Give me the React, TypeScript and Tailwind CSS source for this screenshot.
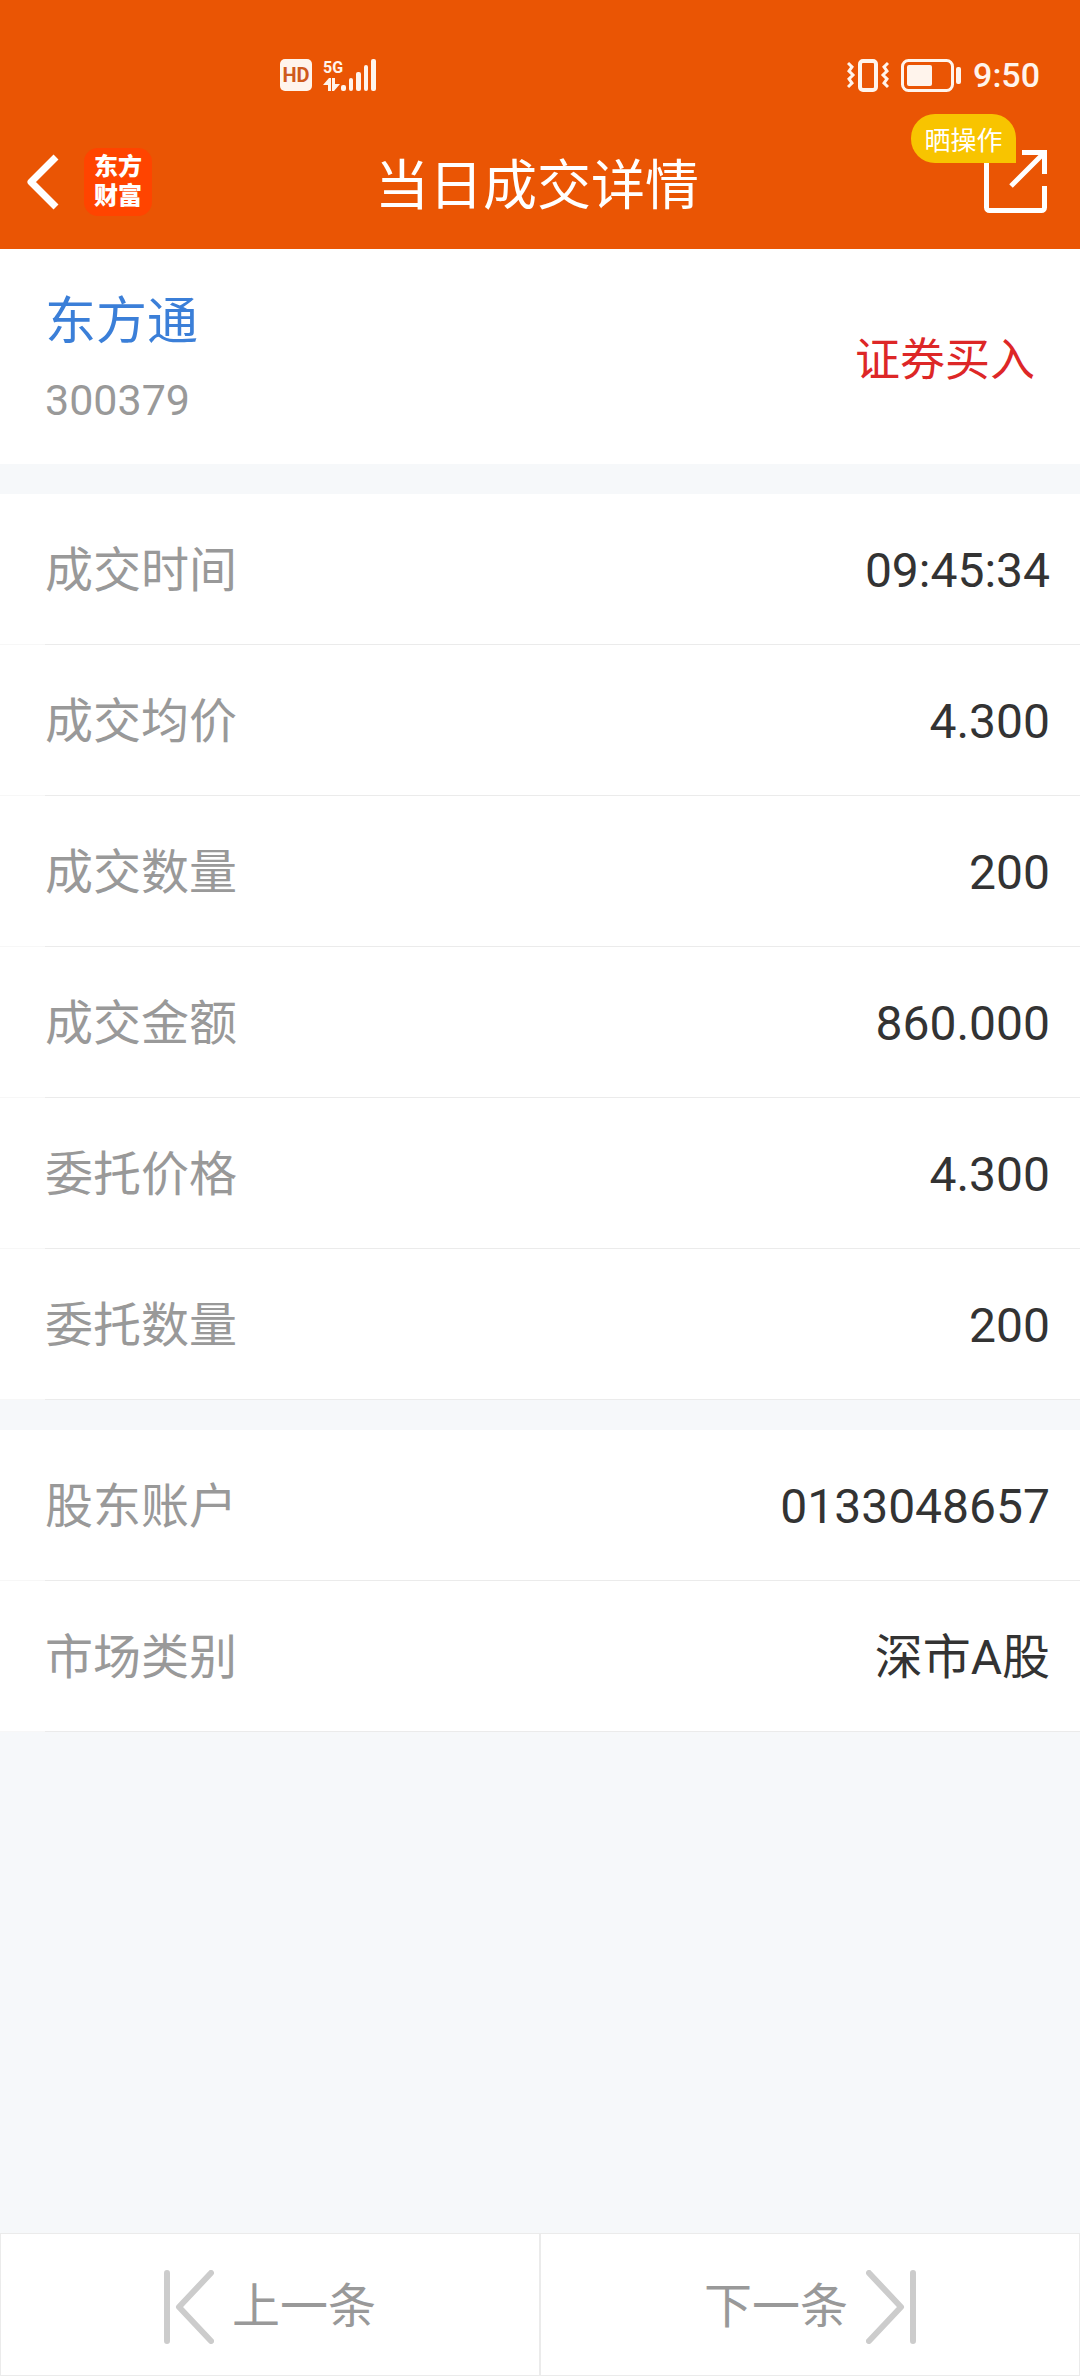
const tradeRows = [
  { label: '成交时间', value: '09:45:34' },
  { label: '成交均价', value: '4.300' },
  { label: '成交数量', value: '200' },
  { label: '成交金额', value: '860.000' },
  { label: '委托价格', value: '4.300' },
  { label: '委托数量', value: '200' },
];

const accountRows = [
  { label: '股东账户', value: '0133048657' },
  { label: '市场类别', value: '深市A股' },
];

function SignalIcon() {
  return (
    <svg width="54" height="34" viewBox="0 0 54 34" fill="#fff4ec">
      <text x="0" y="15" fontSize="16" fontWeight="700" fontFamily="Roboto, sans-serif">
        5G
      </text>
      <path d="M0 27 6 20h2v13H5v-6zM9 20h3v6h5l-6 7H9z" />
      <rect x="18" y="27" width="5" height="6" rx="2" />
      <rect x="26" y="20" width="4" height="13" rx="2" />
      <rect x="33" y="14" width="5" height="19" rx="2" />
      <rect x="41" y="7" width="4" height="26" rx="2" />
      <rect x="48" y="1" width="5" height="32" rx="2" />
    </svg>
  );
}

function VibrateIcon() {
  return (
    <svg width="42" height="34" viewBox="0 0 42 34" fill="none" stroke="#fff4ec" strokeWidth="3">
      <rect x="13" y="3" width="16" height="29" rx="3" strokeWidth="4" />
      <path d="M1 5l4 4-3 4 4 4-4 4 3 4-4 4M41 5l-4 4 3 4-4 4 4 4-3 4 4 4" />
    </svg>
  );
}

function BatteryIcon() {
  return (
    <svg width="60" height="34" viewBox="0 0 60 34" fill="#fff4ec">
      <rect x="1.5" y="2.5" width="50" height="30" rx="6" fill="none" stroke="#fff4ec" strokeWidth="3" />
      <rect x="6" y="7" width="25" height="21" rx="2" />
      <rect x="55" y="9" width="5" height="17" rx="2" />
    </svg>
  );
}

function InfoList({ rows }: { rows: { label: string; value: string }[] }) {
  return (
    <dl className="bg-white">
      {rows.map((row) => (
        <div key={row.label}>
          <div className="flex h-[150px] items-center justify-between pt-1 pl-[45px] pr-[30px] text-[48px] leading-[60px]">
            <dt className="text-[#999999]">{row.label}</dt>
            <dd className="text-[#333333]">{row.value}</dd>
          </div>
          <div className="flex h-px bg-[#ebebeb]">
            <div className="w-[45px] bg-[#f7f7f7]" />
          </div>
        </div>
      ))}
    </dl>
  );
}

export default function App() {
  return (
    <div className="flex min-h-screen flex-col bg-[#f6f8fa] font-['Roboto','Noto_Sans_CJK_SC',sans-serif]">
      <header className="bg-[#ea5504] text-white">
        {/* Status bar */}
        <div className="flex h-[114px] items-center justify-between pl-[280px] pr-[40px] pt-[36px] text-[#fff4ec]">
          <div className="flex items-center gap-[11px]">
            <span className="flex size-8 items-center justify-center rounded-[5px] bg-[#fff4ec] text-[20px] font-bold leading-8 text-[#cf5a1c]">
              HD
            </span>
            <SignalIcon />
          </div>
          <div className="flex items-center gap-3">
            <VibrateIcon />
            <BatteryIcon />
            <span className="text-[34px] font-medium leading-[40px]">9:50</span>
          </div>
        </div>

        {/* Title bar */}
        <div className="grid h-[135px] grid-cols-[1fr_auto_1fr] items-center pl-[27px] pr-[33px]">
          <div className="flex items-center gap-[25px]">
            <button type="button" aria-label="返回">
              <svg width="32" height="56" viewBox="0 0 32 56" fill="none" stroke="#fff" strokeWidth="7">
                <path d="M29 3 4 28l25 25" strokeLinejoin="round" />
              </svg>
            </button>
            <div className="flex size-[68px] flex-col items-center justify-center rounded-[14px] bg-[#ff4400] text-[24px] font-black leading-[29px]">
              <span>东方</span>
              <span>财富</span>
            </div>
          </div>
          <h1 className="font-['Noto_Sans_CJK_SC',sans-serif] text-[54px] leading-[64px]">当日成交详情</h1>
          <button type="button" aria-label="分享" className="relative justify-self-end">
            <svg width="63" height="63" viewBox="0 0 63 63" fill="none" stroke="#fff" strokeWidth="5">
              <path d="M2.500 0v57.500a3 3 0 0 0 3 3h52a3 3 0 0 0 3-3V36M38 2.500h22.500V24M60 3 27 36" />
            </svg>
            <span className="absolute -top-9 right-[31px] flex h-[49px] w-[105px] items-center justify-center rounded-[24px] rounded-br-none bg-[#f8c400] pt-1 text-[26px] leading-[32px]">
              晒操作
            </span>
          </button>
        </div>
      </header>

      <main className="flex grow flex-col gap-[30px]">
        <section className="flex h-[215px] items-center justify-between bg-white px-[45px] pt-2">
          <div>
            <h2 className="text-[51px] leading-[78px] text-[#3b7fd8]">东方通</h2>
            <p className="text-[43px] leading-[78px] text-[#999999]">300379</p>
          </div>
          <span className="text-[45px] leading-[60px] text-[#dd2727]">证券买入</span>
        </section>
        <InfoList rows={tradeRows} />
        <InfoList rows={accountRows} />
      </main>

      <nav className="grid h-[143px] grid-cols-2 text-[48px] leading-[60px] text-[#999999]">
        <button type="button" className="flex items-center justify-center gap-[18px] border border-[#ebebeb] bg-white pt-1">
          <svg width="50" height="74" viewBox="0 0 50 74" fill="none" stroke="#cccccc" strokeWidth="6" strokeLinecap="round" strokeLinejoin="round">
            <path d="M3 3v68M47 3 15 37l32 34" />
          </svg>
          上一条
        </button>
        <button type="button" className="flex items-center justify-center gap-[18px] border border-[#ebebeb] bg-white pt-1">
          下一条
          <svg width="50" height="74" viewBox="0 0 50 74" fill="none" stroke="#cccccc" strokeWidth="6" strokeLinecap="round" strokeLinejoin="round">
            <path d="M47 3v68M3 3l32 34L3 71" />
          </svg>
        </button>
      </nav>
    </div>
  );
}
